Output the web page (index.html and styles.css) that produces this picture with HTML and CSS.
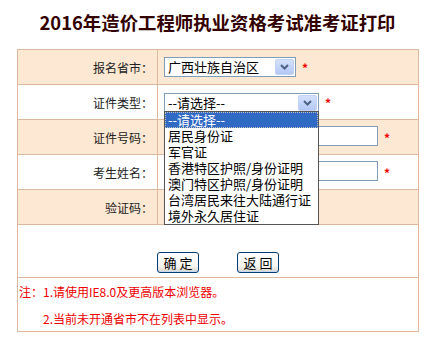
FILE: index.html
```
<!DOCTYPE html>
<html lang="zh-CN">
<head>
    <meta charset="UTF-8">
    <title>2016年造价工程师执业资格考试准考证打印</title>
    <link rel="stylesheet" href="styles.css">
</head>
<body>
    <h1 class="title">2016年造价工程师执业资格考试准考证打印</h1>
    <div class="form">
        <div class="row peach">
            <div class="label">报名省市：</div>
            <div class="field">
                <div class="select select-province">
                    <span class="select-text">广西壮族自治区</span>
                    <span class="select-arrow"><svg width="9" height="6" viewBox="0 0 9 6"><path d="M1 1 L4.5 4.5 L8 1" fill="none" stroke="#4d6185" stroke-width="2"/></svg></span>
                </div>
                <span class="star">*</span>
            </div>
        </div>
        <div class="row">
            <div class="label">证件类型：</div>
            <div class="field">
                <div class="select select-type">
                    <span class="select-text">--请选择--</span>
                    <span class="select-arrow"><svg width="9" height="6" viewBox="0 0 9 6"><path d="M1 1 L4.5 4.5 L8 1" fill="none" stroke="#4d6185" stroke-width="2"/></svg></span>
                    <ul class="dropdown">
                        <li class="selected">--请选择--</li>
                        <li>居民身份证</li>
                        <li>军官证</li>
                        <li>香港特区护照/身份证明</li>
                        <li>澳门特区护照/身份证明</li>
                        <li>台湾居民来往大陆通行证</li>
                        <li>境外永久居住证</li>
                    </ul>
                </div>
                <span class="star">*</span>
            </div>
        </div>
        <div class="row peach">
            <div class="label">证件号码：</div>
            <div class="field">
                <input class="text-input" type="text">
                <span class="star">*</span>
            </div>
        </div>
        <div class="row">
            <div class="label">考生姓名：</div>
            <div class="field">
                <input class="text-input" type="text">
                <span class="star">*</span>
            </div>
        </div>
        <div class="row peach">
            <div class="label">验证码：</div>
            <div class="field"></div>
        </div>
        <div class="row buttons">
            <button class="btn">确 定</button>
            <button class="btn">返 回</button>
        </div>
        <div class="row notes">
            <div>注：1.请使用IE8.0及更高版本浏览器。</div>
            <div class="indent">2.当前未开通省市不在列表中显示。</div>
        </div>
    </div>
</body>
</html>
```
FILE: styles.css
```
body {
    margin: 0;
    background: #fff;
    font-family: "Noto Sans CJK SC", "Noto Sans", sans-serif;
}

.title {
    margin: 0;
    height: 49px;
    line-height: 44px;
    text-align: center;
    font-size: 18.4px;
    font-weight: bold;
    color: #300;
}

.form {
    margin-left: 17px;
    width: 400px;
    border: 1px solid #dfb99d;
}

.row {
    display: flex;
    height: 34px;
    border-bottom: 1px solid #dfb99d;
    background: #fff;
}

.row:last-child {
    border-bottom: none;
}

.peach {
    background: #fde8d3;
}

.label {
    width: 135px;
    padding-right: 4px;
    border-right: 1px solid #dfb99d;
    display: flex;
    align-items: center;
    justify-content: flex-end;
    font-size: 12px;
    color: #222;
}

.field {
    flex: 1;
    display: flex;
    align-items: center;
    padding-left: 6px;
}

.select {
    position: relative;
    box-sizing: border-box;
    height: 20px;
    border: 1px solid #7f9db9;
    background: #fff;
    display: flex;
    align-items: center;
    font-size: 13px;
    color: #000;
}

.select-province {
    width: 132px;
}

.select-type {
    width: 155px;
    height: 19px;
    margin-top: 1px;
}

.select-text {
    flex: 1;
    padding-left: 3px;
    line-height: 16px;
}

.select-arrow {
    box-sizing: border-box;
    width: 19px;
    height: 16px;
    margin-right: 1px;
    border: 1px solid #c3d3f6;
    border-radius: 2px;
    background: linear-gradient(#d4e1fc, #b4c8f4);
    display: flex;
    align-items: center;
    justify-content: center;
}

.dropdown {
    position: absolute;
    top: 100%;
    left: -1px;
    z-index: 2;
    box-sizing: border-box;
    width: 155px;
    margin: 0;
    padding: 0;
    list-style: none;
    border: 1px solid #555;
    background: #fff;
}

.dropdown li {
    height: 16px;
    line-height: 16px;
    padding-left: 3px;
    font-size: 13px;
    white-space: nowrap;
    color: #000;
}

.dropdown li.selected {
    background: #316ac5;
    color: #fff;
    outline: 1px dotted #c0c0c0;
    outline-offset: -1px;
}

.text-input {
    box-sizing: border-box;
    width: 214px;
    height: 20px;
    margin: 0;
    margin-top: -2px;
    border: 1px solid #7f9db9;
    background: #fff;
}

.star {
    margin-left: 6px;
    color: #e00;
    font-size: 12px;
    font-weight: bold;
}

.buttons {
    height: 53px;
    justify-content: center;
    align-items: flex-start;
    gap: 38px;
    padding-top: 27px;
    box-sizing: border-box;
}

.btn {
    box-sizing: border-box;
    width: 42px;
    height: 21px;
    padding: 0;
    border: 1px solid #003c74;
    border-radius: 3px;
    background: linear-gradient(#fff, #f4f4f0 70%, #d8d4c8);
    box-shadow: inset 0 -1px 0 #c8d8f0;
    font-family: "Noto Sans CJK SC", sans-serif;
    font-size: 13px;
    line-height: 18px;
    color: #000;
}

.notes {
    height: 53px;
    flex-direction: column;
    font-size: 12px;
    line-height: 27px;
    color: #e00;
    padding-left: 1px;
}

.indent {
    padding-left: 24px;
}
```
